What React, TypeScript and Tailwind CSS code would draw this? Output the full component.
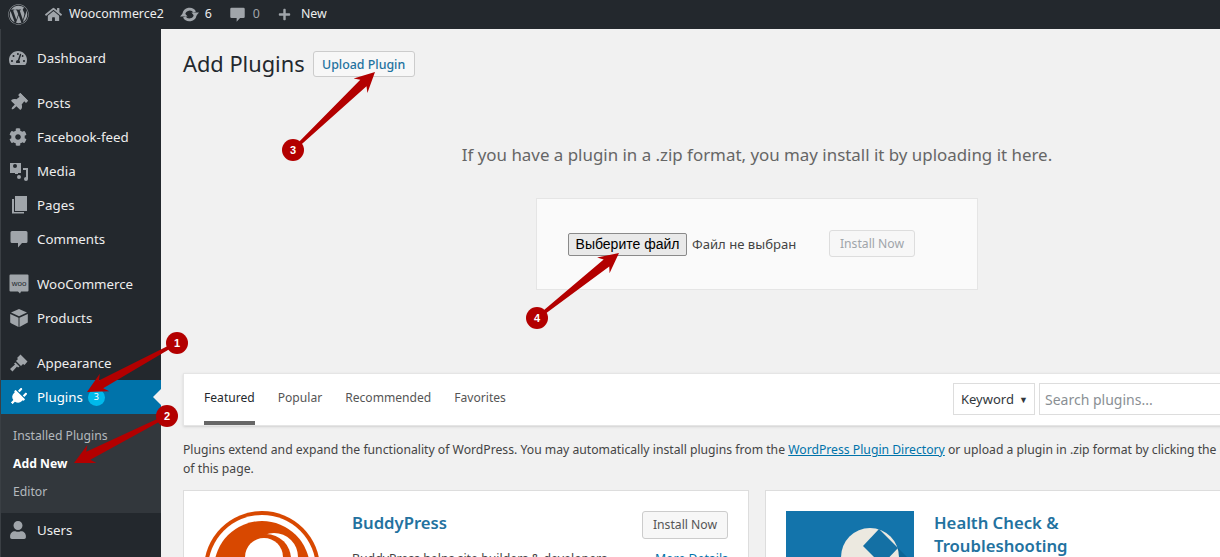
import { FaCog, FaHome, FaPlug, FaPlus, FaTachometerAlt, FaThumbtack, FaUser, FaWordpress } from "react-icons/fa";
import type { ReactNode } from "react";

const font = "[font-family:'Noto_Sans','Open_Sans',sans-serif]";

function MediaIcon() {
  return (
    <svg viewBox="0 0 20 20" className="w-5 h-5" fill="currentColor">
      <path d="M1 2h11v10H9v1H6v-1H1z M4 5a2 2 0 1 0 4 0 2 2 0 0 0-4 0z" fillRule="evenodd" />
      <path d="M14 7h5v11a2 2 0 0 1-4 0 2 2 0 0 1 2-2V9h-3z M8 16a2 2 0 1 0 4 0 2 2 0 0 0-4 0z" />
    </svg>
  );
}

function WooIcon() {
  return (
    <svg viewBox="0 0 20 20" className="w-5 h-5">
      <path d="M1.500 .5h17a1 1 0 0 1 1 1v15a1 1 0 0 1-1 1H12l-1 2-2-2H1.500a1 1 0 0 1-1-1v-15a1 1 0 0 1 1-1z" fill="#a0a5aa" />
      <text x="10" y="11.500" textAnchor="middle" fontSize="8" fill="#23282d" fontFamily="'Liberation Sans', sans-serif">woo</text>
    </svg>
  );
}

function BoxIcon() {
  return (
    <svg viewBox="0 0 20 20" className="w-5 h-5" fill="currentColor">
      <path d="M10 1l8 3.500-8 3.800-8-3.800z M1.200 6l8.300 3.800V19l-7-3.500-1.300-1z M18.800 6v8.500L10.500 19V9.800z" />
    </svg>
  );
}

function PagesIcon() {
  return (
    <svg viewBox="0 0 20 20" className="w-5 h-5" fill="currentColor">
      <path d="M6 1h12v15H6z" />
      <path d="M3 4h2v13h10v1.500H3z" />
    </svg>
  );
}

function CommentIcon({ className = "w-5 h-5" }: { className?: string }) {
  return (
    <svg viewBox="0 0 20 20" className={className} fill="currentColor">
      <path d="M3 2h14a1.500 1.500 0 0 1 1.500 1.500v9A1.500 1.500 0 0 1 17 14h-4l-4 4.500V14H3a1.500 1.500 0 0 1-1.500-1.500v-9A1.500 1.500 0 0 1 3 2z" />
    </svg>
  );
}

function BrushIcon() {
  return (
    <svg viewBox="0 0 20 20" className="w-5 h-5" fill="currentColor">
      <path d="M11.500 1.500l7 7-3 3.500-1.500-1-2 2-5-5 2-2-1-1z" />
      <path d="M6.500 9.500l4 4-1.500 1-1-1-4.500 5-2.500-2.500 5-4.500-1-1z" />
    </svg>
  );
}

function UpdateIcon() {
  return (
    <svg viewBox="0 0 20 20" className="w-[19px] h-[19px] text-[#a0a5aa]" fill="none" stroke="currentColor">
      <path d="M4 9.500A6.200 6.200 0 0 1 15.500 7.500" strokeWidth="3" />
      <path d="M16 10.500A6.200 6.200 0 0 1 4.500 12.500" strokeWidth="3" />
      <path d="M12 8h8l-4 4.500z M0 12h8L4 7.500z" fill="currentColor" stroke="none" />
    </svg>
  );
}

function MenuItem({ icon, label, active, badge }: { icon: ReactNode; label: string; active?: boolean; badge?: string }) {
  return (
    <div className={`relative flex items-center h-[34px] ${active ? "bg-[#0073aa] text-white" : "text-[#eeeeee]"}`}>
      <span className={`w-[36px] pl-2 shrink-0 flex items-center text-[18px] ${active ? "text-white" : "text-[#a0a5aa]"}`}>{icon}</span>
      <span className="text-[13.3px] mt-[2px]">{label}</span>
      {badge && (
        <span className="ml-[5px] w-[17px] h-[17px] rounded-full bg-[#00b9eb] text-white text-[9px] flex items-center justify-center">{badge}</span>
      )}
      {active && <span className="absolute right-0 top-[9px] border-y-[8px] border-y-transparent border-r-[8px] border-r-[#f1f1f1]" />}
    </div>
  );
}

function Sidebar() {
  return (
    <aside className="w-[161px] shrink-0 bg-[#23282d] pt-3 border-l border-[#3a3f44]">
      <MenuItem icon={<FaTachometerAlt />} label="Dashboard" />
      <div className="mt-[11px]">
        <MenuItem icon={<FaThumbtack className="rotate-45" />} label="Posts" />
        <MenuItem icon={<FaCog />} label="Facebook-feed" />
        <MenuItem icon={<MediaIcon />} label="Media" />
        <MenuItem icon={<PagesIcon />} label="Pages" />
        <MenuItem icon={<CommentIcon />} label="Comments" />
      </div>
      <div className="mt-[11px]">
        <MenuItem icon={<WooIcon />} label="WooCommerce" />
        <MenuItem icon={<BoxIcon />} label="Products" />
      </div>
      <div className="mt-[11px]">
        <MenuItem icon={<BrushIcon />} label="Appearance" />
        <MenuItem icon={<FaPlug className="rotate-45" />} label="Plugins" active badge="3" />
        <div className="bg-[#32373c] h-[99px] pt-[8px] pl-3 text-[12.2px] text-[#b4b9be] flex flex-col">
          <span className="h-[28px] flex items-center">Installed Plugins</span>
          <span className="h-[28px] flex items-center font-bold text-white">Add New</span>
          <span className="h-[28px] flex items-center">Editor</span>
        </div>
        <MenuItem icon={<FaUser />} label="Users" />
      </div>
    </aside>
  );
}

function TopBar() {
  return (
    <header className="h-[29px] bg-[#23282d] text-[#eeeeee] text-[12.4px] flex items-center pl-2 shrink-0">
      <FaWordpress className="w-[21px] h-[21px] text-[#a0a5aa]" />
      <FaHome className="ml-[16px] w-[17px] h-[17px] text-[#a0a5aa]" />
      <span className="ml-[7px]">Woocommerce2</span>
      <span className="ml-[16px]"><UpdateIcon /></span>
      <span className="ml-[6px]">6</span>
      <span className="ml-[17px]"><CommentIcon className="w-[17px] h-[17px] text-[#a0a5aa]" /></span>
      <span className="ml-[7px] text-[#a0a5aa]">0</span>
      <FaPlus className="ml-[18px] w-[13px] h-[13px] text-[#a0a5aa]" />
      <span className="ml-[10px]">New</span>
    </header>
  );
}

function BuddyPressLogo() {
  return (
    <svg viewBox="0 0 116 116" className="w-[116px] h-[116px] shrink-0">
      <circle cx="58" cy="58" r="58" fill="#d84800" />
      <circle cx="58" cy="58" r="54" fill="#ffffff" />
      <circle cx="58" cy="58" r="48" fill="#d84800" />
      <circle cx="70" cy="46" r="24" fill="#ffffff" />
      <circle cx="62" cy="48" r="25" fill="#d84800" />
      <circle cx="60" cy="46" r="19" fill="#ffffff" />
    </svg>
  );
}

function HealthLogo() {
  return (
    <svg viewBox="0 0 128 128" className="w-[128px] h-[128px] shrink-0">
      <rect width="128" height="128" fill="#1374ab" />
      <path d="M93 18l35 35v75H70z" fill="#0f6596" />
      <circle cx="84" cy="46" r="29" fill="#ece9e0" />
      <path d="M77 35L93 18l19 19-16 17z" fill="#1470a4" />
    </svg>
  );
}

function Arrow({ from, to, w = 9, hl = 20, hw = 10 }: { from: [number, number]; to: [number, number]; w?: number; hl?: number; hw?: number }) {
  const dx = to[0] - from[0];
  const dy = to[1] - from[1];
  const len = Math.hypot(dx, dy);
  const ux = dx / len;
  const uy = dy / len;
  const nx = -uy;
  const ny = ux;
  const neck = [to[0] - ux * hl * 0.8, to[1] - uy * hl * 0.8];
  const back = [to[0] - ux * hl, to[1] - uy * hl];
  const pts = [
    [from[0] + nx * 1.5, from[1] + ny * 1.5],
    [neck[0] + nx * w * 0.5, neck[1] + ny * w * 0.5],
    [back[0] + nx * hw, back[1] + ny * hw],
    to,
    [back[0] - nx * hw, back[1] - ny * hw],
    [neck[0] - nx * w * 0.5, neck[1] - ny * w * 0.5],
    [from[0] - nx * 1.5, from[1] - ny * 1.5],
  ];
  return <polygon points={pts.map((p) => p.join(",")).join(" ")} fill="#b30000" />;
}

function Marker({ x, y, n }: { x: number; y: number; n: string }) {
  return (
    <span
      className="absolute w-[22px] h-[22px] -ml-[11px] -mt-[11px] rounded-full bg-[#b30000] text-white text-[11px] font-bold flex items-center justify-center [font-family:'Liberation_Sans',sans-serif]"
      style={{ left: x, top: y }}
    >
      {n}
    </span>
  );
}

function Annotations() {
  return (
    <div className="absolute inset-0 pointer-events-none">
      <svg width="1220" height="557" className="absolute inset-0">
        <Arrow from={[177, 343]} to={[87, 392]} />
        <Arrow from={[167, 416]} to={[74, 463]} />
        <Arrow from={[293, 150]} to={[375, 72]} />
        <Arrow from={[537, 318]} to={[619, 253]} />
      </svg>
      <Marker x={177} y={343} n="1" />
      <Marker x={167} y={416} n="2" />
      <Marker x={293} y={150} n="3" />
      <Marker x={537} y={318} n="4" />
    </div>
  );
}

export default function App() {
  return (
    <div className={`relative w-[1220px] h-[557px] overflow-hidden flex flex-col bg-[#f1f1f1] ${font}`}>
      <TopBar />
      <div className="flex flex-1 min-h-0">
        <Sidebar />
        <main className="flex-1 min-w-0 pl-[22px] pt-[22px] text-[#444444] overflow-hidden">
          <div className="flex items-center gap-[8px] h-[26px]">
            <h1 className="text-[21.8px] text-[#23282d]">Add Plugins</h1>
            <button className="h-[26px] w-[102px] pt-[2px] bg-[#f7f7f7] border border-[#cccccc] rounded-[3px] text-[12.4px] font-medium text-[#23729f]">Upload Plugin</button>
          </div>
          <p className="mt-[66px] h-[24px] leading-[24px] w-[1148px] text-center text-[16.9px] text-[#666666]">If you have a plugin in a .zip format, you may install it by uploading it here.</p>
          <div className="ml-[353px] mt-[31px] w-[442px] h-[92px] bg-[#fafafa] border border-[#e5e5e5] flex items-center pl-[31px]">
            <button className="h-[23px] w-[119px] mt-[1px] bg-[#e9e9e9] border border-[#8a8a8a] rounded-[2px] text-[14px] text-black [font-family:'Liberation_Sans',sans-serif]">Выберите файл</button>
            <span className="ml-[5px] mt-[1px] text-[13.1px] text-[#444444] w-[137px]">Файл не выбран</span>
            <button className="h-[27px] w-[86px] pt-[2px] border border-[#dddddd] bg-[#f7f7f7] rounded-[3px] text-[12.2px] text-[#a0a5aa] -mt-[2px]">Install Now</button>
          </div>
          <div className="mt-[83px] w-[1100px] h-[53px] bg-white border border-[#e5e5e5] flex items-stretch pl-[20px] shadow-sm">
            <div className="flex text-[12.1px] text-[#555555] gap-[23px]">
              <span className="h-full flex items-center pt-[2px] border-b-4 border-[#666666] text-[#23282d]">Featured</span>
              <span className="h-full flex items-center pb-[2px]">Popular</span>
              <span className="h-full flex items-center pb-[2px]">Recommended</span>
              <span className="h-full flex items-center pb-[2px]">Favorites</span>
            </div>
            <div className="flex items-center ml-auto gap-1 -mt-[1px]">
              <div className="w-[82px] h-[32px] pt-[2px] border border-[#dddddd] flex items-center justify-between pl-[7px] pr-[6px] text-[13px] text-[#32373c]">
                <span>Keyword</span>
                <span className="text-[9px]">▼</span>
              </div>
              <input placeholder="Search plugins..." className="w-[243px] h-[32px] border border-[#dddddd] px-[5px] text-[14px] placeholder:text-[#8a8f94]" />
            </div>
          </div>
          <div className="mt-[14px] whitespace-nowrap text-[12.2px] leading-[19px] text-[#444444]">
            Plugins extend and expand the functionality of WordPress. You may automatically install plugins from the <a className="underline text-[#0073aa]">WordPress Plugin Directory</a> or upload a plugin in .zip format by clicking the button at the top
            <br />
            of this page.
          </div>
          <div className="mt-[12px] flex gap-4 w-[1100px]">
            <article className="w-[566px] h-[200px] bg-white border border-[#dddddd] pt-[20px] pl-[20px] flex shrink-0">
              <BuddyPressLogo />
              <div className="ml-[32px] flex-1">
                <h3 className="text-[16.7px] font-semibold text-[#23729f] leading-[24px]">BuddyPress</h3>
                <p className="mt-[15px] text-[12.3px] whitespace-nowrap">BuddyPress helps site builders &amp; developers</p>
              </div>
              <div className="pr-[20px] flex flex-col items-end">
                <button className="w-[86px] h-[28px] pt-px border border-[#cccccc] bg-[#f7f7f7] rounded-[3px] text-[12.2px] text-[#555555]">Install Now</button>
                <a className="mt-[11px] text-[12.3px] text-[#0073aa]">More Details</a>
              </div>
            </article>
            <article className="w-[566px] h-[200px] bg-white border border-[#dddddd] pt-[20px] pl-[20px] flex shrink-0">
              <HealthLogo />
              <h3 className="ml-[20px] text-[16.7px] font-semibold text-[#23729f] leading-[23px]">Health Check &amp;<br />Troubleshooting</h3>
            </article>
          </div>
        </main>
      </div>
      <Annotations />
    </div>
  );
}
